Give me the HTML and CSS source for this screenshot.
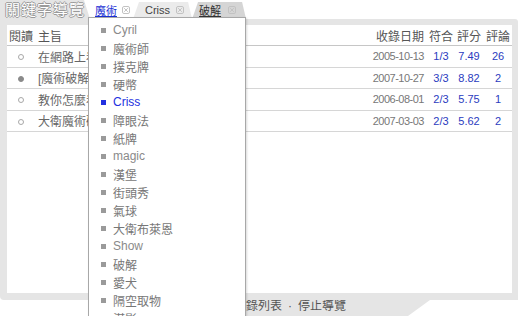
FILE: index.html
```html
<!DOCTYPE html>
<html lang="zh-Hant">
<head>
    <meta charset="UTF-8">
    <meta name="viewport" content="width=device-width, initial-scale=1.0">
    <title>關鍵字導覽</title>
    <link rel="stylesheet" href="styles.css">
</head>
<body>

<div class="nav">
    <div class="tabs">
        <div class="title">關鍵字導覽</div>
        <div class="tab current">
            <a href="#">魔術</a>
            <svg class="close" width="8" height="8" viewBox="0 0 8 8"><rect x="0.5" y="0.5" width="7" height="7" rx="1.5"/><path d="M2.2 2.2L5.8 5.8M5.8 2.2L2.2 5.8"/></svg>
        </div>
        <div class="tab plain">
            <span>Criss</span>
            <svg class="close" width="8" height="8" viewBox="0 0 8 8"><rect x="0.5" y="0.5" width="7" height="7" rx="1.5"/><path d="M2.2 2.2L5.8 5.8M5.8 2.2L2.2 5.8"/></svg>
        </div>
        <div class="tab dark">
            <span class="u">破解</span>
            <svg class="close" width="8" height="8" viewBox="0 0 8 8"><rect x="0.5" y="0.5" width="7" height="7" rx="1.5"/><path d="M2.2 2.2L5.8 5.8M5.8 2.2L2.2 5.8"/></svg>
        </div>
    </div>

    <div class="frame">
        <div class="panel">
            <table class="list">
                <colgroup>
                    <col style="width: 28px">
                    <col>
                    <col style="width: 61px">
                    <col style="width: 26px">
                    <col style="width: 30px">
                    <col style="width: 28px">
                </colgroup>
                <thead>
                    <tr>
                        <th class="c-read">閱讀</th>
                        <th class="c-subj">主旨</th>
                        <th class="c-date">收錄日期</th>
                        <th class="c-num">符合</th>
                        <th class="c-num">評分</th>
                        <th class="c-num">評論</th>
                    </tr>
                </thead>
                <tbody>
                    <tr>
                        <td class="c-read"><span class="dot"></span></td>
                        <td class="c-subj">在網路上看到的魔術破解</td>
                        <td class="c-date">2005-10-13</td>
                        <td class="c-num">1/3</td>
                        <td class="c-num">7.49</td>
                        <td class="c-num">26</td>
                    </tr>
                    <tr>
                        <td class="c-read"><span class="dot read"></span></td>
                        <td class="c-subj">[魔術破解] Criss Angel</td>
                        <td class="c-date">2007-10-27</td>
                        <td class="c-num">3/3</td>
                        <td class="c-num">8.82</td>
                        <td class="c-num">2</td>
                    </tr>
                    <tr>
                        <td class="c-read"><span class="dot"></span></td>
                        <td class="c-subj">教你怎麼看穿魔術</td>
                        <td class="c-date">2006-08-01</td>
                        <td class="c-num">2/3</td>
                        <td class="c-num">5.75</td>
                        <td class="c-num">1</td>
                    </tr>
                    <tr>
                        <td class="c-read"><span class="dot"></span></td>
                        <td class="c-subj">大衛魔術破解</td>
                        <td class="c-date">2007-03-03</td>
                        <td class="c-num">2/3</td>
                        <td class="c-num">5.62</td>
                        <td class="c-num">2</td>
                    </tr>
                </tbody>
            </table>
        </div>
    </div>

    <div class="foot">
        <div class="back">返回收錄列表<span class="sep">·</span>停止導覽</div>
    </div>

    <ul class="menu">
        <li class="en">Cyril</li>
        <li>魔術師</li>
        <li>撲克牌</li>
        <li>硬幣</li>
        <li class="en on">Criss</li>
        <li>障眼法</li>
        <li>紙牌</li>
        <li class="en">magic</li>
        <li>漢堡</li>
        <li>街頭秀</li>
        <li>氣球</li>
        <li>大衛布萊恩</li>
        <li class="en">Show</li>
        <li>破解</li>
        <li>愛犬</li>
        <li>隔空取物</li>
        <li>湛影</li>
    </ul>
</div>

</body>
</html>
```

FILE: styles.css
```css
body {
    margin: 0;
    font-family: "Liberation Sans", "Noto Sans CJK TC", sans-serif;
    font-size: 12px;
    color: #666;
    background-color: #fff;
    overflow: hidden;
}
.nav {
    position: relative;
    width: 518px;
    height: 316px;
}

/* top row: title + keyword tabs */
.tabs {
    display: flex;
    height: 19px;
}
.title {
    position: relative;
    z-index: 0;
    width: 88px;
    box-sizing: border-box;
    padding: 1px 0 0 5px;
    font-size: 15px;
    line-height: 18px;
    letter-spacing: 1px;
    color: #fff;
    white-space: nowrap;
    text-shadow: 1px 0 #9a9a9a, -1px 0 #9a9a9a, 0 1px #9a9a9a, 0 -1px #9a9a9a;
}
.title::before {
    content: "";
    position: absolute;
    z-index: -1;
    top: 0;
    left: 0;
    width: 90px;
    height: 19px;
    background-color: #e5e5e5;
    clip-path: polygon(0 0, 84px 0, 90px 100%, 0 100%);
}
.tab {
    position: relative;
    z-index: 0;
    display: flex;
    align-items: center;
    gap: 5px;
    height: 19px;
    font-size: 11px;
    color: #444;
}
.tab::before {
    content: "";
    position: absolute;
    z-index: -1;
    top: 2px;
    bottom: 0;
    left: 0;
    right: 0;
    clip-path: polygon(6px 0, calc(100% - 4px) 0, 100% 100%, 0 100%);
}
.tab.current {
    margin-left: 2px;
    padding: 0 3px 0 5px;
}
.tab.current a {
    color: #1c2fd4;
}
.tab.plain {
    gap: 6px;
    padding: 0 8px 0 12px;
}
.tab.plain::before {
    background-color: #ebebeb;
}
.tab.dark {
    gap: 7px;
    padding: 0 10px 0 7px;
}
.tab.dark::before {
    background-color: #d5d5d5;
}
.tab .u {
    color: #333;
    text-decoration: underline;
}
.close {
    display: block;
}
.close rect, .close path {
    fill: none;
    stroke: #c2c2c2;
    stroke-width: 1;
}

/* frame + list */
.frame {
    background-color: #e5e5e5;
    padding: 6px 6px 7px 7px;
    border-radius: 0 3px 0 4px;
}
.panel {
    background-color: #fff;
    height: 268px;
}
.list {
    width: 100%;
    border-collapse: collapse;
    table-layout: fixed;
}
.list th {
    height: 20px;
    padding: 0;
    font-weight: normal;
    color: #555;
    border-bottom: 1px solid #c6c6c6;
}
.list td {
    height: 20.5px;
    padding: 0;
    border-bottom: 1px solid #d6d6d6;
}
.c-read {
    text-align: center;
}
.c-subj {
    text-align: left;
    padding-left: 3px !important;
    white-space: nowrap;
    overflow: hidden;
}
.c-date {
    text-align: right;
    padding-right: 4px !important;
}
.c-num {
    text-align: center;
}
td.c-date {
    font-size: 11px;
    letter-spacing: -0.5px;
    color: #777;
}
td.c-num {
    font-size: 11px;
    color: #2b3cc0;
}
.dot {
    display: inline-block;
    width: 4px;
    height: 4px;
    border: 1px solid #a8a8a8;
    border-radius: 50%;
    vertical-align: middle;
}
.dot.read {
    background-color: #8a8a8a;
    border-color: #8a8a8a;
}

/* bottom links */
.foot {
    display: flex;
    height: 16px;
}
.back {
    margin-left: 195px;
    width: 235px;
    box-sizing: border-box;
    padding-left: 15px;
    line-height: 12px;
    color: #555;
    background-color: #e5e5e5;
    clip-path: polygon(0 0, 100% 0, calc(100% - 22px) 100%, 0 100%);
}
.sep {
    margin: 0 6px;
}

/* keyword dropdown, runs past the window bottom */
.menu {
    position: absolute;
    top: 17px;
    left: 88px;
    width: 156px;
    height: 295px;
    overflow: hidden;
    margin: 0;
    padding: 3px 0 0;
    list-style: none;
    background-color: #fff;
    border: 1px solid #a8a8a8;
    border-bottom: none;
    box-shadow: 1px 1px 2px rgba(0, 0, 0, 0.15);
}
.menu li {
    display: flex;
    align-items: center;
    gap: 7px;
    height: 18px;
    padding-left: 12px;
    color: #777;
}
.menu li::before {
    content: "";
    width: 5px;
    height: 5px;
    background-color: #9a9a9a;
}
.menu li.en {
    color: #8a8a8a;
}
.menu li.on {
    color: #2230e0;
}
.menu li.on::before {
    background-color: #2230e0;
}
```
